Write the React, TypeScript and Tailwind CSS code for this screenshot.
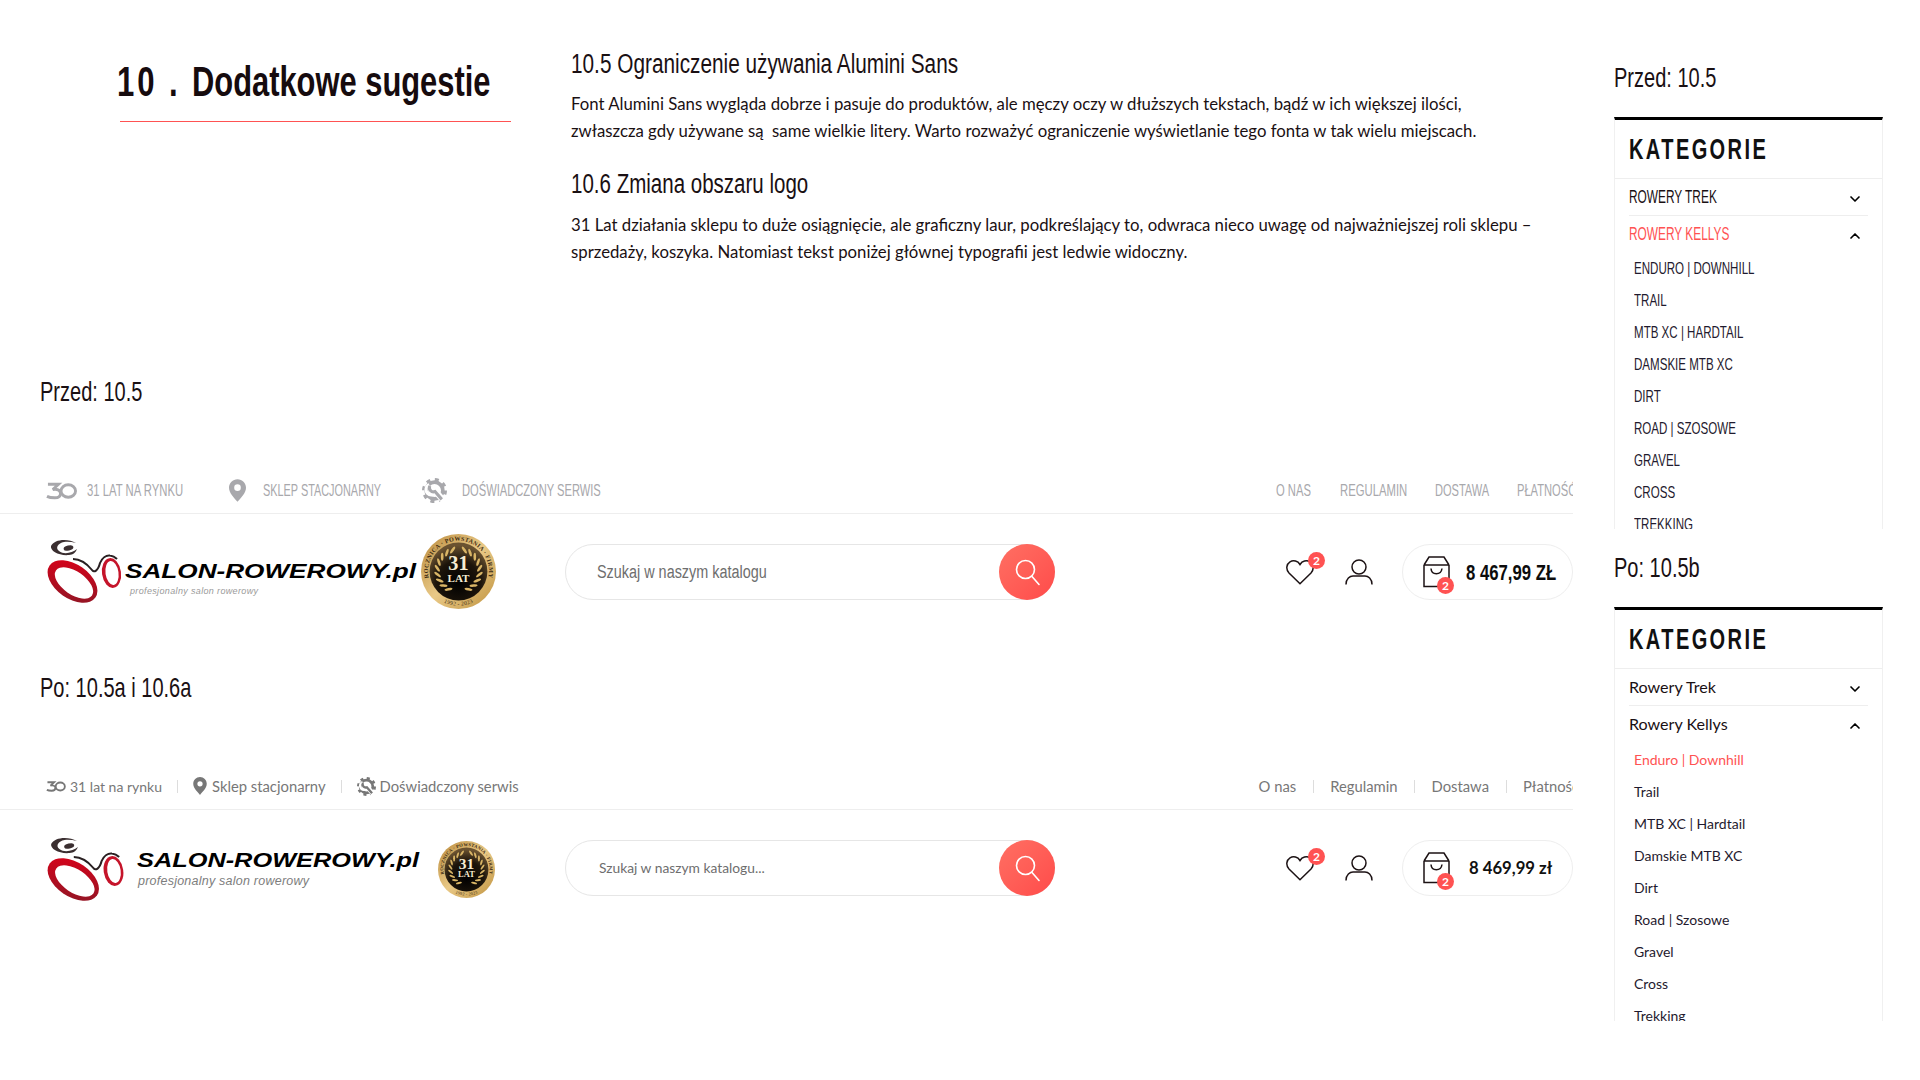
import { useId, type ReactNode } from 'react';
import { ChevronDown, ChevronUp } from 'lucide-react';

const cond = "font-['Liberation_Sans',sans-serif]";
const body = "font-['Lato','Noto_Sans',sans-serif]";

// no condensed family is installed, so the narrow type is squeezed horizontally
function Squeeze({ w, scale, children }: { w: string; scale: string; children: ReactNode }) {
  return (
    <span className={`inline-block whitespace-nowrap ${w}`}>
      <span className={`inline-block origin-left ${scale}`}>{children}</span>
    </span>
  );
}

function ThirtyIcon({ className }: { className: string }) {
  return (
    <svg viewBox="0 0 32 18" className={className} fill="none" stroke="currentColor" strokeWidth="3">
      <path d="M2 2h11l-6 5.500c4-1 8 .5 8 4 0 3-2.600 4.500-6 4.500-3 0-6-.5-8-1.500" />
      <ellipse cx="23" cy="9" rx="7.500" ry="6.500" />
    </svg>
  );
}

function PinIcon({ className }: { className: string }) {
  return (
    <svg viewBox="0 0 18 24" className={className} fill="currentColor">
      <path
        fillRule="evenodd"
        d="M9 0C4 0 0 4 0 9c0 6 6 11 9 15 3-4 9-9 9-15 0-5-4-9-9-9zm0 5.500a3.500 3.500 0 1 1 0 7 3.500 3.500 0 0 1 0-7z"
      />
    </svg>
  );
}

function GearIcon({ className }: { className: string }) {
  return (
    <svg viewBox="0 0 24 24" className={className} fill="none" stroke="currentColor">
      <circle cx="12" cy="12" r="8" strokeWidth="3.500" />
      <circle cx="12" cy="12" r="10.500" strokeWidth="3" strokeDasharray="3.800 4.450" />
      <path d="M13 13l8 9" stroke="#fff" strokeWidth="6" />
      <path d="M7 6.500a5 5 0 1 0 6.500 6.500" stroke="#fff" strokeWidth="3" />
      <path d="M7.500 7.500a4 4 0 0 0 5 5.500l6.500 7.500" strokeWidth="3" />
    </svg>
  );
}

function SearchGlyph() {
  return (
    <svg viewBox="0 0 26 28" className="h-[28px] w-[26px]" fill="none" stroke="#fff" strokeWidth="1.600">
      <circle cx="10.500" cy="10.500" r="9" />
      <path d="M17 17.500l7 8" strokeLinecap="round" />
    </svg>
  );
}

function HeartGlyph() {
  return (
    <svg viewBox="0 0 28 26" className="h-[26px] w-[28px]" fill="none" stroke="#1c1214" strokeWidth="1.500">
      <path d="M14 24.800 3 14C-.5 10.200.5 5 4 2.800c3.500-2 7.800-.8 10 2.700 2.200-3.500 6.500-4.700 10-2.700 3.500 2.200 4.500 7.400 1 11.200z" />
    </svg>
  );
}

function BagIcon() {
  return (
    <svg viewBox="0 0 27 32" className="h-[32px] w-[27px]" fill="none" stroke="#1c1214" strokeWidth="1.500">
      <path d="M1 9 6 1h15l5 8M1 9h25M1 9V30.500h25V9" />
      <path d="M8 12.500c.5 7 10 7 11 0" />
    </svg>
  );
}

function UserIcon() {
  return (
    <svg viewBox="0 0 28 26" className="h-[26px] w-[28px]" fill="none" stroke="#1c1214" strokeWidth="1.500">
      <circle cx="14" cy="8" r="7" />
      <path d="M1 25.500c0-6 4-8.500 7-8.500h12c3 0 7 2.500 7 8.500" />
    </svg>
  );
}

function Badge({ className }: { className: string }) {
  return (
    <span
      className={`absolute flex h-[17px] w-[17px] items-center justify-center rounded-full bg-[#ff5252] text-[12px] font-bold text-white ${body} ${className}`}
    >
      2
    </span>
  );
}

function Medal({ x, y, size }: { x: number; y: number; size: number }) {
  const id = useId();
  const leaves = [0, 1, 2, 3, 4, 5, 6, 7, 8];
  return (
    <svg x={x} y={y} width={size} height={size} viewBox="0 0 74 74">
      <defs>
        <linearGradient id={`${id}g`} x1="0" y1="0" x2="1" y2="1">
          <stop offset="0" stopColor="#b98a3c" />
          <stop offset="0.5" stopColor="#e9c987" />
          <stop offset="1" stopColor="#c0933f" />
        </linearGradient>
        <radialGradient id={`${id}d`} cx="0.5" cy="0.7" r="0.65">
          <stop offset="0" stopColor="#000" />
          <stop offset="0.6" stopColor="#1d150b" />
          <stop offset="1" stopColor="#6a5230" />
        </radialGradient>
        <path id={`${id}t`} d="M8.500 46A30 30 0 1 1 65.500 46" />
        <path id={`${id}b`} d="M14 56A30 30 0 0 0 60 56" />
      </defs>
      <circle cx="37" cy="37" r="37" fill={`url(#${id}g)`} />
      <circle cx="37" cy="37" r="28.500" fill={`url(#${id}d)`} />
      <text fontFamily="Liberation Serif" fontSize="6" fontWeight="700" fill="#3b2a12" letterSpacing=".3">
        <textPath href={`#${id}t`} startOffset="50%" textAnchor="middle">
          ROCZNICA · POWSTANIA · FIRMY
        </textPath>
      </text>
      <text fontFamily="Liberation Serif" fontSize="5.500" fill="#3b2a12">
        <textPath href={`#${id}b`} startOffset="50%" textAnchor="middle" dominantBaseline="hanging">
          1992 - 2023
        </textPath>
      </text>
      {leaves.map((i) => {
        const deg = 118 + i * 17;
        const a = deg * (Math.PI / 180);
        const lx = 37 + 21 * Math.cos(a);
        const ly = 36 + 21 * Math.sin(a);
        const rx = 37 - 21 * Math.cos(a);
        return (
          <g key={i} fill="#d9b566">
            <ellipse cx={lx} cy={ly} rx="4" ry="1.300" transform={`rotate(${deg + 50} ${lx} ${ly})`} />
            <ellipse cx={rx} cy={ly} rx="4" ry="1.300" transform={`rotate(${-deg - 50} ${rx} ${ly})`} />
          </g>
        );
      })}
      <text x="37" y="36" textAnchor="middle" fontFamily="Liberation Serif" fontWeight="700" fontSize="20" fill="#f6ecd2">
        31
      </text>
      <text x="37" y="47" textAnchor="middle" fontFamily="Liberation Serif" fontWeight="700" fontSize="11" fill="#f6ecd2">
        LAT
      </text>
    </svg>
  );
}

function BikeMark({ transform }: { transform: string }) {
  const id = useId();
  return (
    <g transform={transform}>
      <defs>
        <linearGradient id={`${id}r`} x1="0" y1="0" x2="1" y2="1">
          <stop offset="0" stopColor="#de0019" />
          <stop offset="1" stopColor="#8a1826" />
        </linearGradient>
      </defs>
      <path
        fill="#3a2e30"
        d="M30 5C22 0 8 1 5 8c-1 5 8 10 18 9 4 0 7-3 8-6-5 4-13 6-18 2-4-3-1-8 5-9 4-.5 8 0 12 1z"
      />
      <ellipse cx="22.500" cy="10" rx="5" ry="2.500" transform="rotate(-15 22.500 10)" fill="#3a2e30" />
      <path d="M27 21c8 0 15 6 19 11 2 3 6 1 8-7 2-5 6-8 10-7.500 3 .3 5 1.500 7 3.500" fill="none" stroke="#2a2022" strokeWidth="2" />
      <ellipse cx="26.500" cy="43.500" rx="28" ry="17" transform="rotate(35 26.500 43.500)" fill={`url(#${id}r)`} />
      <ellipse cx="28" cy="45" rx="22" ry="11.500" transform="rotate(35 28 45)" fill="#fff" />
      <ellipse cx="65.500" cy="35" rx="9.500" ry="15" transform="rotate(-8 65.500 35)" fill="#c5142a" />
      <ellipse cx="66" cy="35" rx="6.500" ry="12" transform="rotate(-8 66 35)" fill="#fff" />
    </g>
  );
}

function OldLogo() {
  return (
    <svg width="460" height="90" viewBox="0 0 460 90" className="shrink-0">
      <BikeMark transform="translate(0 11)" />
      <text
        x="79"
        y="51"
        fontFamily="Liberation Sans"
        fontWeight="700"
        fontStyle="italic"
        fontSize="20"
        fill="#000"
        textLength="291"
        lengthAdjust="spacingAndGlyphs"
      >
        SALON-ROWEROWY.pl
      </text>
      <text x="84" y="67" fontFamily="Liberation Sans" fontStyle="italic" fontSize="9" fill="#9a9a9a" textLength="128">
        profesjonalny salon rowerowy
      </text>
      <Medal x={375} y={7} size={75} />
    </svg>
  );
}

function NewLogo() {
  return (
    <svg width="460" height="90" viewBox="0 0 460 90" className="shrink-0">
      <BikeMark transform="translate(0 13) scale(1.030 1)" />
      <text
        x="91"
        y="44"
        fontFamily="Liberation Sans"
        fontWeight="700"
        fontStyle="italic"
        fontSize="20"
        fill="#000"
        textLength="282"
        lengthAdjust="spacingAndGlyphs"
      >
        SALON-ROWEROWY.pl
      </text>
      <text x="92" y="62" fontFamily="Liberation Sans" fontStyle="italic" fontSize="12.500" fill="#7d7d7d" textLength="171">
        profesjonalny salon rowerowy
      </text>
      <Medal x={392} y={18} size={57} />
    </svg>
  );
}

function HeaderRow({ logo, placeholder, price }: { logo: ReactNode; placeholder: ReactNode; price: ReactNode }) {
  return (
    <div className="flex h-[86px] items-start pl-[46px] pt-[30px]">
      <div className="-mt-[17px] h-[56px] w-[519px] shrink-0">{logo}</div>
      <div className="flex h-[56px] w-[490px] shrink-0 items-center justify-between rounded-full border border-[#e6e6e6]">
        {placeholder}
        <div className="-mr-px flex h-[56px] w-[56px] items-center justify-center rounded-full bg-gradient-to-br from-[#ff6f63] to-[#ff4a4a] pl-[2px] pt-[2px]">
          <SearchGlyph />
        </div>
      </div>
      <div className="ml-auto flex h-[56px] items-center">
        <div className="relative mr-[31px]">
          <HeartGlyph />
          <Badge className="-right-[11px] -top-[7px]" />
        </div>
        <div className="mr-[29px]">
          <UserIcon />
        </div>
        <div className="flex h-[56px] w-[171px] items-center rounded-full border border-[#eeeeee] pl-[20px]">
          <div className="relative mr-[16px]">
            <BagIcon />
            <Badge className="-bottom-[6px] left-[14px]" />
          </div>
          {price}
        </div>
      </div>
    </div>
  );
}

function OldHeader() {
  const muted = `text-[17px] leading-none text-[#a8a8ac] ${cond}`;
  return (
    <div>
      <div className="flex h-[46px] items-center justify-between border-b border-[#eeeeee] pl-[46px]">
        <div className={`flex items-center ${muted}`}>
          <ThirtyIcon className="mr-[10px] h-[18px] w-[31px]" />
          <Squeeze w="w-[97px]" scale="scale-x-[.665]">31 LAT NA RYNKU</Squeeze>
          <PinIcon className="ml-[45px] mr-[17px] h-[23px] w-[17px]" />
          <Squeeze w="w-[119px]" scale="scale-x-[.64]">SKLEP STACJONARNY</Squeeze>
          <GearIcon className="ml-[40px] mr-[15px] h-[25px] w-[25px]" />
          <Squeeze w="w-[140px]" scale="scale-x-[.655]">DOŚWIADCZONY SERWIS</Squeeze>
        </div>
        <div className={`flex shrink-0 items-center gap-[28px] ${muted}`}>
          <Squeeze w="w-[36px]" scale="scale-x-[.66]">O NAS</Squeeze>
          <Squeeze w="w-[67px]" scale="scale-x-[.665]">REGULAMIN</Squeeze>
          <Squeeze w="w-[54px]" scale="scale-x-[.65]">DOSTAWA</Squeeze>
          <Squeeze w="w-[56px]" scale="scale-x-[.655]">PŁATNOŚĆ</Squeeze>
        </div>
      </div>
      <HeaderRow
        logo={<OldLogo />}
        placeholder={
          <span className={`ml-[31px] text-[18px] text-[#6e6e6e] ${cond}`}>
            <Squeeze w="w-[171px]" scale="scale-x-[.80]">Szukaj w naszym katalogu</Squeeze>
          </span>
        }
        price={
          <span className={`text-[22px] font-bold text-[#0c0c0c] ${cond}`}>
            <Squeeze w="w-[88px]" scale="scale-x-[.76]">8 467,99 ZŁ</Squeeze>
          </span>
        }
      />
    </div>
  );
}

function NewHeader() {
  const left = [
    { icon: <ThirtyIcon className="h-[11px] w-[20px]" />, label: '31 lat na rynku', gap: 'gap-[4px] text-[14px]' },
    { icon: <PinIcon className="h-[18px] w-[14px]" />, label: 'Sklep stacjonarny', gap: 'gap-[5px]' },
    { icon: <GearIcon className="h-[19px] w-[19px]" />, label: 'Doświadczony serwis', gap: 'gap-[4px]' },
  ];
  return (
    <div>
      <div className={`flex h-[46px] items-center justify-between border-b border-[#eeeeee] pb-[1px] pl-[46px] text-[14.800px] text-[#777777] ${body}`}>
        <div className="flex items-center">
          {left.map((item, i) => (
            <div key={item.label} className="flex items-center">
              {i > 0 && <span className="mx-[15px] h-[13px] w-px bg-[#dddddd]" />}
              <span className={`flex items-center ${item.gap}`}>
                {item.icon}
                {item.label}
              </span>
            </div>
          ))}
        </div>
        <div className="flex shrink-0 items-center">
          {['O nas', 'Regulamin', 'Dostawa'].map((label) => (
            <span key={label} className="flex items-center">
              {label}
              <span className="mx-[16.500px] h-[13px] w-px bg-[#dddddd]" />
            </span>
          ))}
          <span className="w-[50px] overflow-hidden whitespace-nowrap">Płatność</span>
        </div>
      </div>
      <HeaderRow
        logo={<NewLogo />}
        placeholder={<span className={`ml-[33px] text-[13.800px] text-[#6e6e6e] ${body}`}>Szukaj w naszym katalogu...</span>}
        price={<span className={`ml-[3px] whitespace-nowrap pt-[2px] text-[16.700px] font-bold text-[#111111] ${body}`}>8 469,99 zł</span>}
      />
    </div>
  );
}

function Label({ children, className = '' }: { children: ReactNode; className?: string }) {
  return (
    <div className={`flex h-[40px] items-center text-[28px] text-[#1a1013] ${cond} ${className}`}>
      <Squeeze w="w-[200px]" scale="scale-x-[.715]">{children}</Squeeze>
    </div>
  );
}

function CategoryPanel({ old, height }: { old: boolean; height: string }) {
  const items = old
    ? ['ENDURO | DOWNHILL', 'TRAIL', 'MTB XC | HARDTAIL', 'DAMSKIE MTB XC', 'DIRT', 'ROAD | SZOSOWE', 'GRAVEL', 'CROSS', 'TREKKING']
    : ['Enduro | Downhill', 'Trail', 'MTB XC | Hardtail', 'Damskie MTB XC', 'Dirt', 'Road | Szosowe', 'Gravel', 'Cross', 'Trekking'];
  const rowFont = old ? `text-[18px] ${cond}` : `text-[16.100px] ${body}`;
  const itemFont = old ? `text-[17px] ${cond}` : `text-[14px] ${body}`;
  const rows = old ? ['ROWERY TREK', 'ROWERY KELLYS'] : ['Rowery Trek', 'Rowery Kellys'];
  const rowLabel = (text: string) =>
    old ? <Squeeze w="w-[110px]" scale="scale-x-[.66]">{text}</Squeeze> : text;
  return (
    <div className={`overflow-hidden border-x border-t-[3px] border-[#f0f0f0] border-t-black ${height}`}>
      <div className={`flex h-[59px] items-center border-b border-[#eeeeee] pl-[14px] pt-[2px] text-[29px] font-bold tracking-[3.500px] text-[#111111] ${cond}`}>
        <Squeeze w="w-[140px]" scale="scale-x-[.69]">KATEGORIE</Squeeze>
      </div>
      <div className="mx-[14px]">
        <div className={`flex h-[37px] items-center justify-between border-b border-[#eeeeee] pr-[5px] pt-[1px] text-[#1a1013] ${rowFont}`}>
          {rowLabel(rows[0])}
          <ChevronDown className="mt-[2px] h-[16px] w-[16px] text-black" strokeWidth={2.5} />
        </div>
        <div className={`flex h-[36px] items-center justify-between pr-[5px] pt-[1px] ${old ? 'text-[#ff5252]' : 'text-[#1a1013]'} ${rowFont}`}>
          {rowLabel(rows[1])}
          <ChevronUp className="mt-[2px] h-[16px] w-[16px] text-black" strokeWidth={2.5} />
        </div>
        <ul className="pl-[5px] pt-[1px]">
          {items.map((item, i) => (
            <li
              key={item}
              className={`flex h-[32px] items-center whitespace-nowrap ${itemFont} ${!old && i === 0 ? 'text-[#ff5252]' : 'text-[#1f1a2e]'}`}
            >
              {old ? <Squeeze w="w-[130px]" scale="scale-x-[.68]">{item}</Squeeze> : item}
            </li>
          ))}
        </ul>
      </div>
    </div>
  );
}

export default function App() {
  const h2 = `h-[38px] text-[27px] leading-[38px] ${cond}`;
  return (
    <div className="flex h-[1080px] w-[1920px] overflow-hidden bg-white">
      <main className="w-[1573px] shrink-0 overflow-hidden">
        <section className="flex h-[372px]">
          <div className="w-[571px] shrink-0 pl-[120px] pt-[54px]">
            <h1 className={`-ml-[3px] flex h-[56px] items-center text-[42px] font-bold leading-none text-[#160b0e] ${cond}`}>
              <Squeeze w="w-[75px]" scale="scale-x-[.74]">
                <span className="tracking-[4px]">10 .</span>
              </Squeeze>
              <Squeeze w="w-[300px]" scale="scale-x-[.735]">Dodatkowe sugestie</Squeeze>
            </h1>
            <div className="mt-[11px] h-px w-[391px] bg-[#ff5252]" />
          </div>
          <div className={`pt-[45px] text-[16.750px] leading-[26.500px] text-[#1a1013] ${body}`}>
            <h2 className={`mb-[8px] ${h2}`}>
              <Squeeze w="w-[400px]" scale="scale-x-[.77]">10.5 Ograniczenie używania Alumini Sans</Squeeze>
            </h2>
            <p className="whitespace-nowrap">Font Alumini Sans wygląda dobrze i pasuje do produktów, ale męczy oczy w dłuższych tekstach, bądź w ich większej ilości,</p>
            <p className="whitespace-nowrap">zwłaszcza gdy używane są&nbsp; same wielkie litery. Warto rozważyć ograniczenie wyświetlanie tego fonta w tak wielu miejscach.</p>
            <h2 className={`mb-[9px] mt-[21px] ${h2}`}>
              <Squeeze w="w-[240px]" scale="scale-x-[.76]">10.6 Zmiana obszaru logo</Squeeze>
            </h2>
            <p className="whitespace-nowrap">31 Lat działania sklepu to duże osiągnięcie, ale graficzny laur, podkreślający to, odwraca nieco uwagę od najważniejszej roli sklepu –</p>
            <p className="whitespace-nowrap">sprzedaży, koszyka. Natomiast tekst poniżej głównej typografii jest ledwie widoczny.</p>
          </div>
        </section>
        <Label className="pl-[40px]">Przed: 10.5</Label>
        <div className="mt-[56px]">
          <OldHeader />
        </div>
        <Label className="mt-[68px] pl-[40px]">Po: 10.5a i 10.6a</Label>
        <div className="mt-[56px]">
          <NewHeader />
        </div>
      </main>
      <aside className="ml-[41px] w-[269px] shrink-0 pt-[58px]">
        <Label>Przed: 10.5</Label>
        <div className="mt-[19px]">
          <CategoryPanel old height="h-[412px]" />
        </div>
        <Label className="mt-[19px]">Po: 10.5b</Label>
        <div className="mt-[19px]">
          <CategoryPanel old={false} height="h-[414px]" />
        </div>
      </aside>
    </div>
  );
}
